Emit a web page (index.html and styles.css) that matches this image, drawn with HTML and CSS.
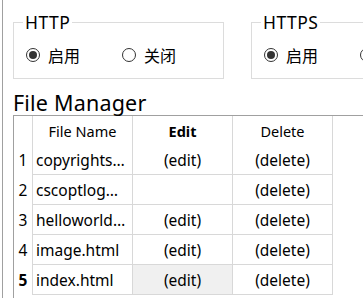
FILE: index.html
```html
<!DOCTYPE html>
<html>
<head>
<meta charset="utf-8">
<link rel="stylesheet" href="styles.css">
</head>
<body>
<div class="frame">
  <div class="groups">
    <fieldset class="group group-http">
      <legend>HTTP</legend>
      <div class="radios">
        <label class="radio"><span class="dot checked"></span>启用</label>
        <label class="radio"><span class="dot"></span>关闭</label>
      </div>
    </fieldset>
    <fieldset class="group group-https">
      <legend>HTTPS</legend>
      <div class="radios">
        <label class="radio"><span class="dot checked"></span>启用</label>
        <label class="radio"><span class="dot"></span>关闭</label>
      </div>
    </fieldset>
  </div>
  <h1 class="title">File Manager</h1>
  <div class="view">
    <table class="grid">
      <thead>
        <tr>
          <th class="vh"></th>
          <th class="col">File Name</th>
          <th class="col cur">Edit</th>
          <th class="col">Delete</th>
        </tr>
      </thead>
      <tbody>
        <tr><td class="vh">1</td><td class="name">copyrights…</td><td>(edit)</td><td>(delete)</td></tr>
        <tr><td class="vh">2</td><td class="name">cscoptlog…</td><td></td><td>(delete)</td></tr>
        <tr><td class="vh">3</td><td class="name">helloworld…</td><td>(edit)</td><td>(delete)</td></tr>
        <tr><td class="vh">4</td><td class="name">image.html</td><td>(edit)</td><td>(delete)</td></tr>
        <tr><td class="vh cur">5</td><td class="name">index.html</td><td class="sel">(edit)</td><td>(delete)</td></tr>
      </tbody>
    </table>
  </div>
</div>
</body>
</html>
```

FILE: styles.css
```css
html, body {
  margin: 0;
  padding: 0;
  background: #ffffff;
  overflow: hidden;
}
body {
  width: 363px;
  height: 298px;
  font-family: "Noto Sans", "Noto Sans CJK SC", sans-serif;
  color: #000;
  padding-left: 2px;
  box-sizing: border-box;
}
.frame {
  border-left: 1px solid #a0a0a0;
  height: 298px;
  padding-left: 10px;
  box-sizing: border-box;
  overflow: hidden;
}
.groups {
  display: flex;
  gap: 27px;
  padding-top: 12px;
  white-space: nowrap;
}
.group {
  margin: 0;
  border: 1px solid #dcdcdc;
  padding: 0;
  height: 67px;
  box-sizing: border-box;
  flex: none;
}
.group-http { width: 211px; }
.group-https { width: 140px; }
.group legend {
  font-size: 17.5px;
  line-height: 20px;
  letter-spacing: 0.5px;
  padding: 0 2px;
  margin-left: 9px;
}
.radios {
  display: flex;
  gap: 42px;
  padding-top: 13px;
  padding-left: 12px;
}
.radio {
  display: flex;
  align-items: center;
  gap: 8px;
  font-size: 16px;
  line-height: 20px;
  font-family: "Noto Sans CJK SC", sans-serif;
}
.dot {
  width: 14px;
  height: 14px;
  box-sizing: border-box;
  border: 1px solid #333;
  border-radius: 50%;
  background: #fff;
  position: relative;
}
.dot.checked::after {
  content: "";
  position: absolute;
  left: 2px;
  top: 2px;
  width: 8px;
  height: 8px;
  border-radius: 50%;
  background: #333;
}
.title {
  margin: 0;
  font-weight: normal;
  font-size: 21.5px;
  line-height: 24px;
  padding-top: 12px;
  letter-spacing: 0.2px;
}
.view {
  border-top: 1px solid #a0a0a0;
  border-left: 1px solid #a0a0a0;
  height: 200px;
}
.grid {
  border-collapse: collapse;
  font-size: 15.5px;
}
.grid th, .grid td {
  padding: 0;
  height: 29px;
  text-align: center;
  font-weight: normal;
  white-space: nowrap;
  border-right: 1px solid #d8d8d8;
  border-bottom: 1px solid #d8d8d8;
}
.grid th {
  border-bottom: none;
  font-size: 14.5px;
  height: 29px;
}
.grid .col { width: 99px; }
.grid .vh {
  width: 18px;
  border-bottom: none;
}
.grid td.name {
  text-align: left;
  padding-left: 3px;
}
.grid .cur { font-weight: bold; }
.grid td.sel { background: #f0f0f0; }
```
